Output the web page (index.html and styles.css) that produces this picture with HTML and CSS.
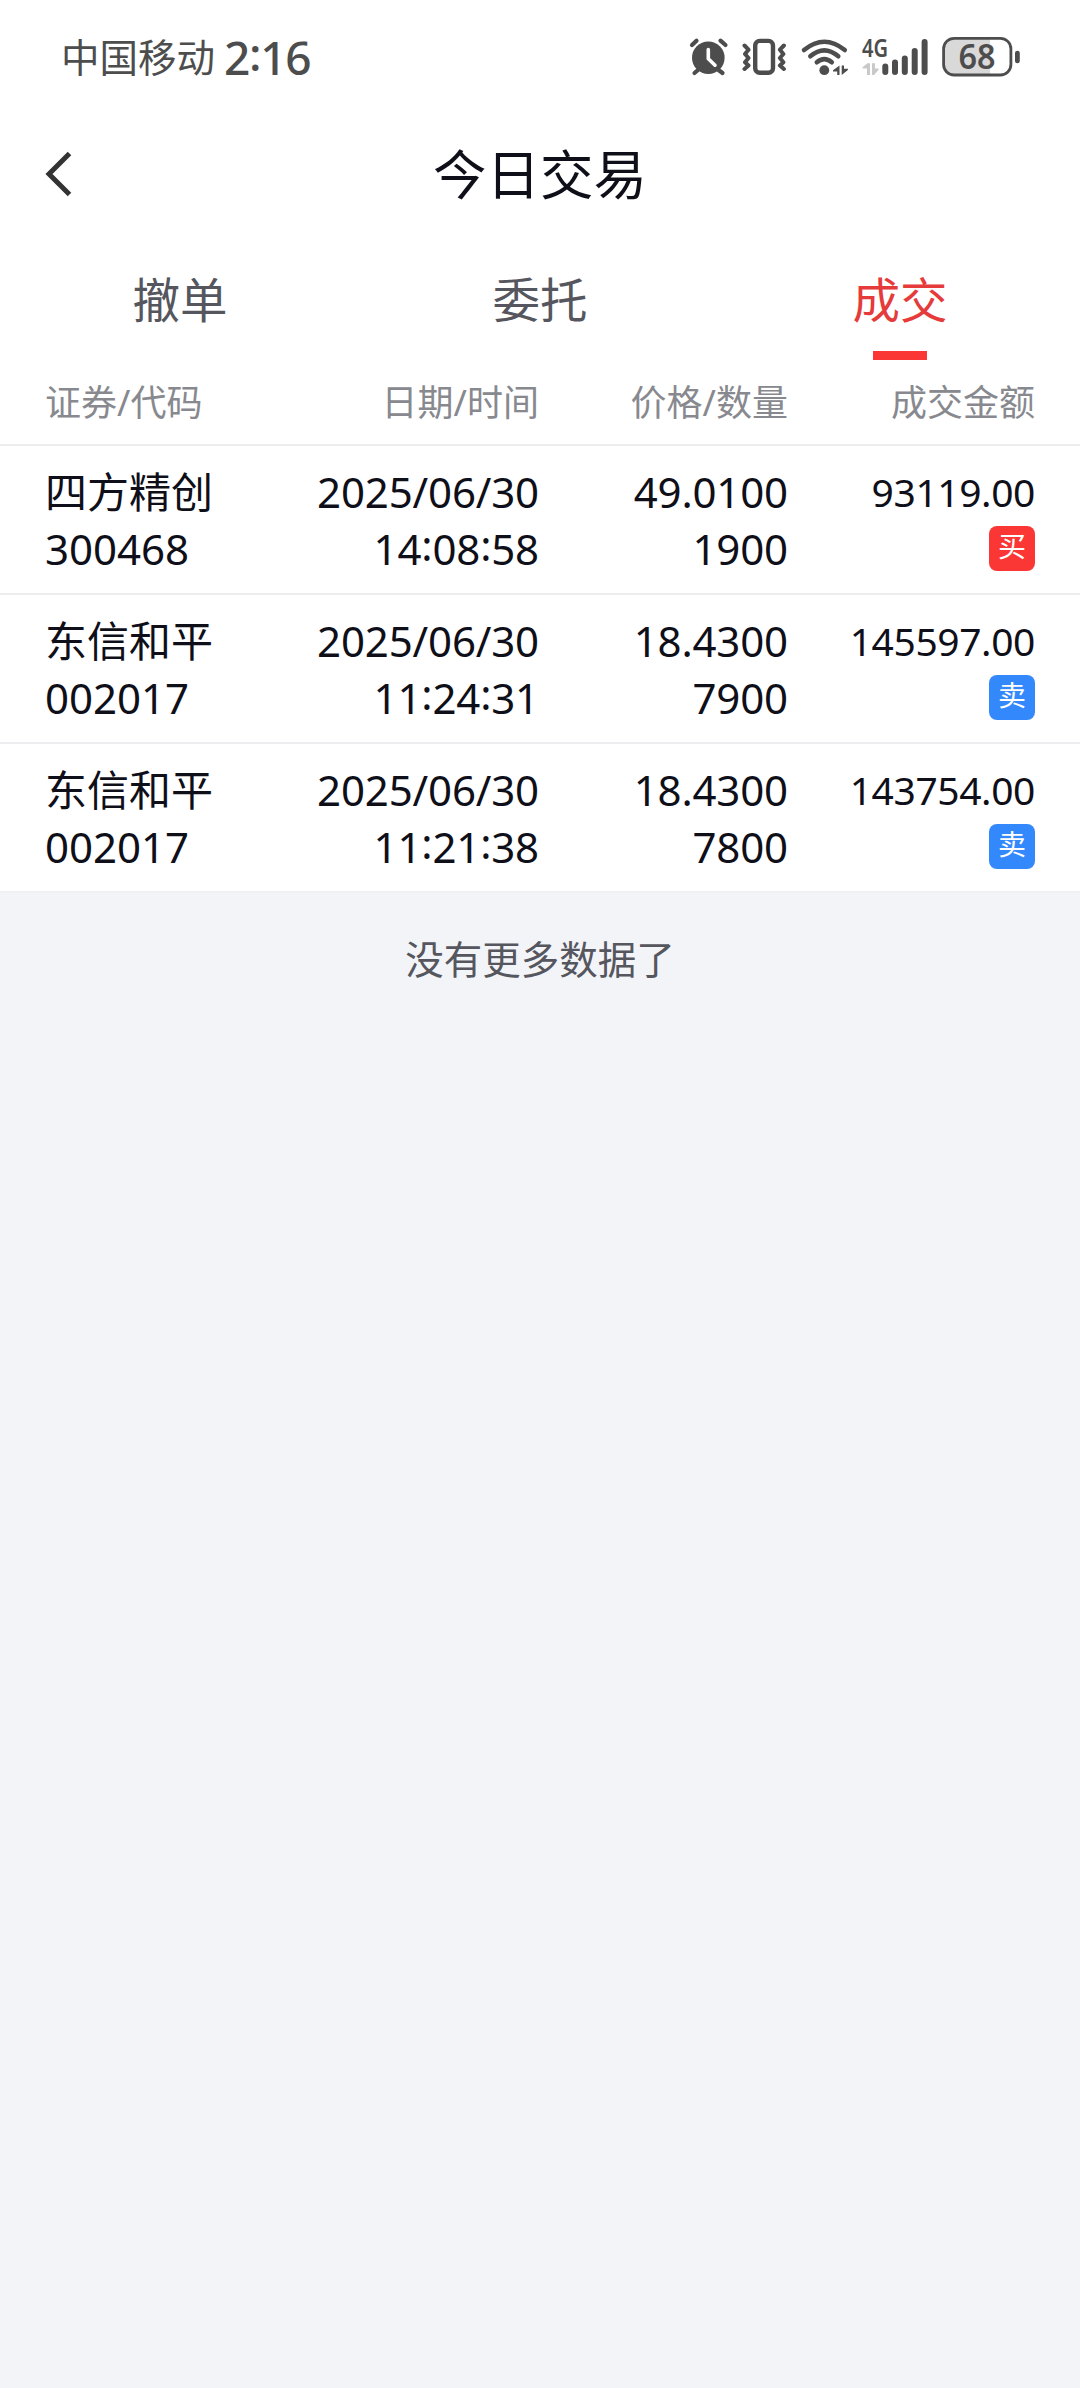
FILE: index.html
```html
<!DOCTYPE html>
<html lang="zh-CN">
<head>
<meta charset="utf-8">
<title>今日交易</title>
<link rel="stylesheet" href="styles.css">
</head>
<body>
<div class="status">
  <span class="carrier">中国移动</span>
  <span class="clock">2<i class="colon">:</i>16</span>
  <div class="status-icons">
    <svg class="alarm" width="40" height="40" viewBox="689 37 40 40">
      <circle cx="709.3" cy="57.8" r="16.3" fill="#4d4d4d"/>
      <path d="M693 45l4.5-4.3M721.500 40.700l5 4.300M699 70l-3.500 3M719.500 70l4 3" fill="none" stroke="#4d4d4d" stroke-width="4.200" stroke-linecap="round"/>
      <path d="M709.300 49.500v9.300l6.700 6.400" fill="none" stroke="#fff" stroke-width="3.600" stroke-linecap="round" stroke-linejoin="round"/>
    </svg>
    <svg class="vibrate" width="46" height="40" viewBox="743 37 46 40" fill="none" stroke="#4d4d4d">
      <rect x="756.200" y="40.900" width="17.800" height="31.800" rx="4.500" stroke-width="4.400"/>
      <path d="M745.500 45.500l4 4.200-3.500 4.300 3.500 4-3.500 4.300 3.500 3.200-4 3.500M784.900 45.500l-4 4.200 3.500 4.300-3.500 4 3.500 4.300-3.500 3.200 4 3.500" stroke-width="4" stroke-linecap="round" stroke-linejoin="round"/>
    </svg>
    <svg class="wifi" width="48" height="40" viewBox="802 37 48 40">
      <g fill="none" stroke="#4d4d4d" stroke-width="4.500" stroke-linecap="round">
        <path d="M805 50Q825.300 33.500 845.800 50"/>
        <path d="M811.300 56.300Q825.300 44.300 839.300 56.300"/>
        <path d="M817.800 62.300Q825.300 56 832.800 62.300"/>
      </g>
      <g fill="#4d4d4d">
        <circle cx="825.300" cy="70.200" r="4.900"/>
        <path d="M840.500 65.500V75h-2.300v-3.500H834v-1.200zM842.700 75v-9.500h2.300v3.200h3.900v1.300z"/>
      </g>
    </svg>
    <svg class="cell" width="68" height="44" viewBox="862 35 68 44">
      <text x="863" y="57" class="net" textLength="26" lengthAdjust="spacingAndGlyphs">4G</text>
      <path d="M871 63.300V75h-3v-6.500h-4.500v-1.300l5-3.900zM873 75V63.300h3v5.200h3.600v1.300l-4.500 5.200z" fill="#c9c9c9"/>
      <path d="M886.300 66.500V72M896 62.500V72M905.800 58.500V72M915.700 51V72M925.600 42V72" stroke="#4d4d4d" stroke-width="6" stroke-linecap="round"/>
    </svg>
    <svg class="battery" width="80" height="42" viewBox="942 36 80 42">
      <path d="M954.500 39H991V74.500H954.500a10 10 0 0 1-10-10V49a10 10 0 0 1 10-10z" fill="#d9d9d9"/>
      <rect x="944.600" y="38.300" width="67.300" height="36.700" rx="10.500" fill="none" stroke="#4d4d4d" stroke-width="2.800"/>
      <rect x="1016" y="50.700" width="4.800" height="12.600" rx="2.400" fill="#4d4d4d"/>
      <text x="959.500" y="69" textLength="37" lengthAdjust="spacingAndGlyphs" class="level">68</text>
    </svg>
  </div>
</div>

<header class="titlebar">
  <svg class="back" width="30" height="60" viewBox="0 0 30 60"><path d="M27.500 9.500L7 30l20.500 20.500" fill="none" stroke="#333" stroke-width="5"/></svg>
  <h1>今日交易</h1>
</header>

<nav class="tabs">
  <span class="tab">撤单</span>
  <span class="tab">委托</span>
  <span class="tab active">成交</span>
</nav>

<main class="list">
  <div class="row head">
    <span>证券/代码</span><span>日期/时间</span><span>价格/数量</span><span>成交金额</span>
  </div>
  <div class="row">
    <div>四方精创<br>300468</div>
    <div>2025/06/30<br>14<i class="colon">:</i>08<i class="colon">:</i>58</div>
    <div>49.0100<br>1900</div>
    <div class="amount"><span>93119.00</span><b class="badge buy">买</b></div>
  </div>
  <div class="row">
    <div>东信和平<br>002017</div>
    <div>2025/06/30<br>11<i class="colon">:</i>24<i class="colon">:</i>31</div>
    <div>18.4300<br>7900</div>
    <div class="amount"><span>145597.00</span><b class="badge sell">卖</b></div>
  </div>
  <div class="row">
    <div>东信和平<br>002017</div>
    <div>2025/06/30<br>11<i class="colon">:</i>21<i class="colon">:</i>38</div>
    <div>18.4300<br>7800</div>
    <div class="amount"><span>143754.00</span><b class="badge sell">卖</b></div>
  </div>
</main>
<p class="end">没有更多数据了</p>
</body>
</html>
```

FILE: styles.css
```css
* { box-sizing: border-box; }
body {
  margin: 0;
  min-height: 2388px;
  background: #f2f4f8;
  color: #0f0f19;
  font-family: "Noto Sans", "Noto Sans CJK SC", sans-serif;
}
svg { display: block; flex: none; overflow: visible; }
.status {
  display: flex;
  align-items: center;
  height: 114px;
  padding: 0 59px 0 61px;
  background: #fff;
  color: #4d4d4d;
}
.carrier { font-size: 38.500px; line-height: 60px; }
.clock { margin-left: 9px; font-size: 46px; line-height: 60px; font-weight: 500; letter-spacing: -1.300px; }
.colon { position: relative; top: -0.09em; font-style: normal; }
.status-icons { display: flex; align-items: center; margin-left: auto; }
.vibrate { margin-left: 14px; }
.wifi { margin-left: 13px; }
.cell { margin-left: 12px; }
.battery { margin-left: 12px; }
.net { font-size: 25px; font-weight: 600; fill: #4d4d4d; }
.level { font-size: 34px; font-weight: 600; fill: #4d4d4d; }
.titlebar {
  display: grid;
  grid-template-columns: 45px 1fr 45px;
  align-items: center;
  height: 120px;
  padding: 0 42px;
  background: #fff;
}
h1 { margin: 0; padding-top: 2px; text-align: center; font-size: 53.500px; font-weight: 400; line-height: 80px; }
.tabs {
  display: grid;
  grid-template-columns: repeat(3, 1fr);
  height: 126px;
  background: #fff;
  color: #55565e;
  font-size: 47.500px;
  line-height: 70px;
}
.tab { display: flex; flex-direction: column; align-items: center; padding-top: 31px; }
.active { color: #e63b3b; }
.active::after { content: ""; width: 54px; height: 9px; margin-top: 16px; background: #fa3735; }
.row {
  display: grid;
  grid-template-columns: 250px 244px 249px 247px;
  height: 149px;
  padding: 17px 45px 0;
  border-bottom: 2px solid #ededef;
  background: #fff;
  font-size: 42px;
  line-height: 57px;
  letter-spacing: -0.150px;
  text-align: right;
}
.row > :first-child { text-align: left; letter-spacing: 0; }
.row:last-child { border-color: #f0f1f4; }
.row.head { height: 86px; padding-top: 14px; font-size: 36px; letter-spacing: 0; color: #88898f; }
.amount { display: flex; flex-direction: column; align-items: flex-end; font-size: 39px; letter-spacing: -0.400px; }
.badge {
  width: 46px;
  height: 45px;
  margin-top: 6px;
  border-radius: 8px;
  color: #fff;
  font-size: 28px;
  font-weight: 400;
  line-height: 41px;
  letter-spacing: 0;
  text-align: center;
}
.buy { background: #fa3735; }
.sell { background: #3388fc; }
.end { margin: 36px 0 0; text-align: center; font-size: 38.500px; line-height: 60px; color: #55565e; }
```
